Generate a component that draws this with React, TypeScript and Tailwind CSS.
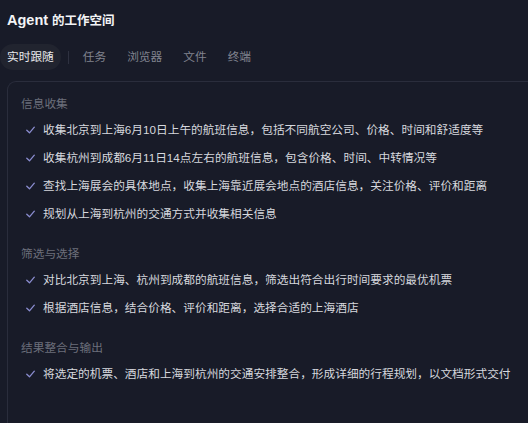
import React from 'react'

interface Section {
  title: string;
  items: string[];
}

const sections: Section[] = [
  {
    title: '信息收集',
    items: [
      '收集北京到上海6月10日上午的航班信息，包括不同航空公司、价格、时间和舒适度等',
      '收集杭州到成都6月11日14点左右的航班信息，包含价格、时间、中转情况等',
      '查找上海展会的具体地点，收集上海靠近展会地点的酒店信息，关注价格、评价和距离',
      '规划从上海到杭州的交通方式并收集相关信息',
    ],
  },
  {
    title: '筛选与选择',
    items: [
      '对比北京到上海、杭州到成都的航班信息，筛选出符合出行时间要求的最优机票',
      '根据酒店信息，结合价格、评价和距离，选择合适的上海酒店',
    ],
  },
  {
    title: '结果整合与输出',
    items: ['将选定的机票、酒店和上海到杭州的交通安排整合，形成详细的行程规划，以文档形式交付'],
  },
]

const tabs = ['任务', '浏览器', '文件', '终端']

const CheckIcon = () => (
  <svg width="9" height="8" viewBox="0 0 9 8" fill="none" className="shrink-0">
    <path d="M0.8 4.2 L3.5 6.8 L8.3 1.2" stroke="#8a8ccf" strokeWidth="1.3" strokeLinecap="round" strokeLinejoin="round" />
  </svg>
)

export default function App() {
  return (
    <div
      className="h-[423px] w-[528px] overflow-hidden bg-[#181b28] flex flex-col"
      style={{ fontFamily: '"Liberation Sans", "Noto Sans CJK SC", sans-serif' }}
    >
      <div className="px-[7px] pt-[8px] h-[34px] flex items-center text-[#f3f4f6] font-semibold">
        <span className="text-[14.5px] font-bold">Agent</span>
        <span className="text-[12.5px] ml-[4px]">的工作空间</span>
      </div>

      <div className="flex items-center gap-[7px] mt-[10px] h-[26px]">
        <div className="h-[26px] px-[7px] rounded-full bg-[#21242f] flex items-center text-[11.7px] text-[#e8e9ec]">
          实时跟随
        </div>
        <div className="w-px h-[13px] bg-[#2e3140]" />
        {tabs.map((t) => (
          <div key={t} className="px-[7px] text-[11.7px] text-[#80838f]">
            {t}
          </div>
        ))}
      </div>

      <div className="ml-[7px] -mr-4 mt-[11px] flex-1 -mb-4 border-l border-t border-[#2a2d3c] rounded-tl-[9px] px-[13px] pt-[12px]">
        {sections.map((s, i) => (
          <div key={s.title} className={i > 0 ? 'mt-4' : ''}>
            <div className="h-5 leading-5 text-[11.7px] text-[#6c6f7b] mb-[2px]">{s.title}</div>
            {s.items.map((item) => (
              <div key={item} className="h-7 flex items-center pl-[5px] gap-[8px]">
                <CheckIcon />
                <span className="text-[11.7px] text-[#d6d8de] whitespace-nowrap">{item}</span>
              </div>
            ))}
          </div>
        ))}
      </div>
    </div>
  )
}
